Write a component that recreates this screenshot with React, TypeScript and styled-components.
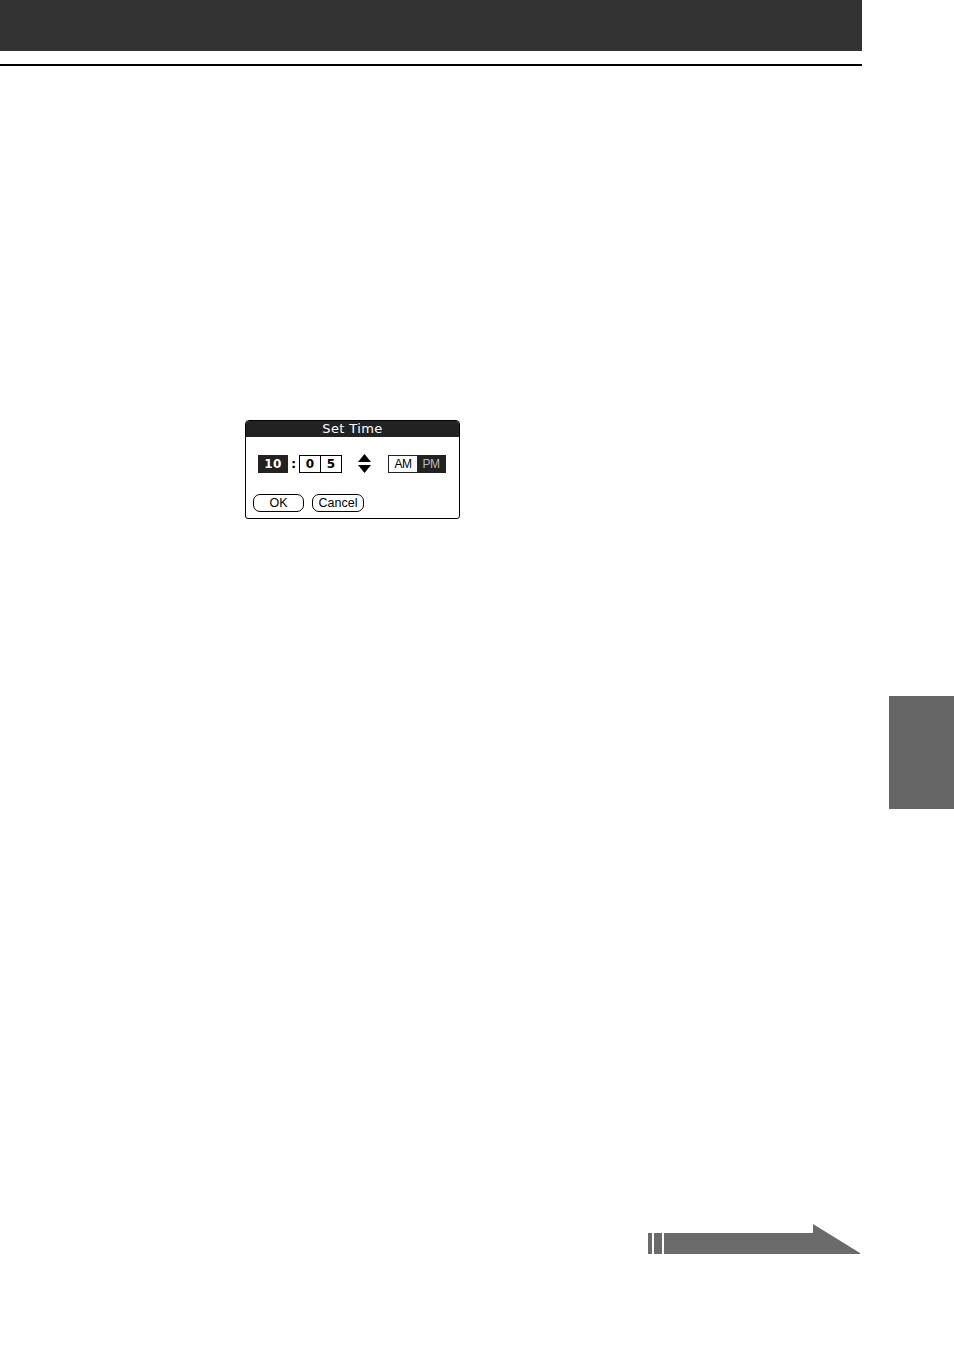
import React from 'react';
import styled, {createGlobalStyle} from 'styled-components';

const GlobalStyle = createGlobalStyle`
  html, body {
    margin: 0;
    padding: 0;
    background: #ffffff;
  }
  body {
    font-family: "Liberation Sans", Arial, sans-serif;
  }
`

const Page = styled.div`
  display: flex;
  width: 954px;
  height: 1351px;
  overflow: hidden;
`

const Main = styled.div`
  display: flex;
  flex-direction: column;
  width: 862px;
`

const HeaderBar = styled.div`
  height: 51px;
  background: #333333;
`

const Rule = styled.div`
  height: 2px;
  margin-top: 13px;
  background: #000000;
`

const Aside = styled.div`
  flex: 1;
  padding: 696px 0 0 27px;
`

const ThumbTab = styled.div`
  height: 113px;
  background: #666666;
`

const Dialog = styled.div`
  display: flex;
  flex-direction: column;
  width: 213px;
  margin: 354px 0 0 245px;
  border: 1px solid #000;
  border-radius: 4px 4px 3px 3px;
  overflow: hidden;
  background: #fff;
`

const TitleBar = styled.div`
  height: 16px;
  line-height: 16px;
  background: #222222;
  color: #fff;
  text-align: center;
  font-family: "DejaVu Sans", sans-serif;
  font-size: 13px;
  letter-spacing: 0.4px;
`

const TimeRow = styled.div`
  display: flex;
  align-items: center;
  height: 19px;
  margin: 17px 0 0 12px;
`

const HourBox = styled.div`
  width: 30px;
  height: 18px;
  background: #222;
  color: #fff;
  display: flex;
  align-items: center;
  justify-content: center;
  font-family: "DejaVu Sans", sans-serif;
  font-weight: bold;
  font-size: 12px;
  letter-spacing: 0.5px;
`

const Colon = styled.div`
  width: 11px;
  text-align: center;
  font-family: "DejaVu Sans", sans-serif;
  font-weight: bold;
  font-size: 13px;
  line-height: 18px;
  color: #000;
`

const DigitGroup = styled.div`
  display: flex;
  height: 16px;
  border: 1px solid #000;
`

const Digit = styled.div<{$divider?: boolean}>`
  width: 20px;
  display: flex;
  align-items: center;
  justify-content: center;
  border-left: ${({$divider}) => ($divider ? '1px solid #000' : 'none')};
  font-family: "DejaVu Sans", sans-serif;
  font-weight: bold;
  font-size: 12px;
  color: #000;
`

const Arrows = styled.svg`
  margin-left: 16px;
  display: block;
`

const Toggle = styled.div`
  display: flex;
  margin-left: 17px;
  height: 16px;
  border: 1px solid #222;
`

const ToggleOption = styled.div<{$on?: boolean}>`
  width: 28px;
  display: flex;
  align-items: center;
  justify-content: center;
  background: ${({$on}) => ($on ? '#222' : '#fff')};
  color: ${({$on}) => ($on ? '#bbbbbb' : '#000')};
  font-size: 12px;
  letter-spacing: -0.5px;
`

const ButtonRow = styled.div`
  display: flex;
  gap: 8px;
  margin: 21px 0 6px 7px;
`

const DialogButton = styled.div<{$width: number}>`
  width: ${({$width}) => $width}px;
  height: 16px;
  border: 1px solid #000;
  border-radius: 7px;
  display: flex;
  align-items: center;
  justify-content: center;
  font-size: 12.5px;
  color: #000;
`

const ContinueArrow = styled.svg`
  display: block;
  margin: 705px 0 0 647px;
`

const SetTimeDialog: React.FC = () => (
  <Dialog>
    <TitleBar>Set Time</TitleBar>
    <TimeRow>
      <HourBox>10</HourBox>
      <Colon>:</Colon>
      <DigitGroup>
        <Digit>0</Digit>
        <Digit $divider>5</Digit>
      </DigitGroup>
      <Arrows width="13" height="19" viewBox="0 0 13 19">
        <path d="M6.5 0 L13 8 L0 8 Z" fill="#000"/>
        <path d="M0 11 L13 11 L6.5 19 Z" fill="#000"/>
      </Arrows>
      <Toggle>
        <ToggleOption>AM</ToggleOption>
        <ToggleOption $on>PM</ToggleOption>
      </Toggle>
    </TimeRow>
    <ButtonRow>
      <DialogButton $width={49}>OK</DialogButton>
      <DialogButton $width={50}>Cancel</DialogButton>
    </ButtonRow>
  </Dialog>
)

export default function App() {
  return (
    <Page>
      <GlobalStyle/>
      <Main>
        <HeaderBar/>
        <Rule/>
        <SetTimeDialog/>
        <ContinueArrow width="214" height="30" viewBox="0 0 214 30">
          <rect x="1" y="9" width="4" height="21" fill="#6b6b6b"/>
          <rect x="7" y="9" width="8" height="21" fill="#6b6b6b"/>
          <path d="M17 9 L166 9 L166 0 L213 29 L213 30 L17 30 Z" fill="#6b6b6b"/>
        </ContinueArrow>
      </Main>
      <Aside>
        <ThumbTab/>
      </Aside>
    </Page>
  );
}
